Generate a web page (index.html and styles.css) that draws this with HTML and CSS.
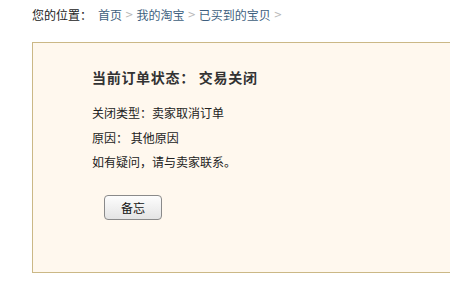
FILE: index.html
```html
<!DOCTYPE html>
<html lang="zh-CN">
<head>
<meta charset="utf-8">
<link rel="stylesheet" href="styles.css">
</head>
<body>
<div class="crumbs">
  <span class="label">您的位置：</span>
  <a class="link">首页</a><span class="sep">&gt;</span>
  <a class="link">我的淘宝</a><span class="sep">&gt;</span>
  <a class="link">已买到的宝贝</a><span class="sep">&gt;</span>
</div>
<div class="status-box">
  <h2 class="title">当前订单状态： 交易关闭</h2>
  <p class="line">关闭类型：卖家取消订单</p>
  <p class="line">原因： 其他原因</p>
  <p class="line">如有疑问，请与卖家联系。</p>
  <div class="actions"><button class="btn">备忘</button></div>
</div>
</body>
</html>
```
FILE: styles.css
```css
html, body {
  margin: 0;
  padding: 0;
  background: #fff;
  font-family: "Noto Sans CJK SC", "Noto Sans", sans-serif;
  font-size: 12px;
  color: #333;
  overflow: hidden;
}
.crumbs {
  height: 30px;
  padding-left: 32px;
  display: flex;
  align-items: center;
  line-height: 16px;
}
.label { color: #222; margin-right: 6px; }
.link { color: #3e5f80; text-decoration: none; }
.sep { color: #b8b8b8; margin: 0 3px; font-family: "DejaVu Sans", sans-serif; font-size: 10px; }
.status-box {
  margin-top: 12px;
  margin-left: 32px;
  width: 440px;
  height: 231px;
  border: 1px solid #cbb886;
  background: #fff8ee;
  padding-left: 59px;
  padding-top: 22px;
  box-sizing: border-box;
}
.title {
  margin: 0 0 12px 0;
  font-size: 14px;
  font-weight: bold;
  color: #333;
  line-height: 24px;
  letter-spacing: 0.7px;
}
.line {
  margin: 0;
  line-height: 24.5px;
  color: #222;
}
.actions {
  padding-top: 20px;
  padding-left: 12px;
}
.btn {
  width: 58px;
  height: 25px;
  border: 1px solid #8a8a8a;
  border-radius: 4px;
  background: linear-gradient(#fdfdfd, #e4e4e4);
  font-family: "Noto Sans CJK SC", sans-serif;
  font-size: 12px;
  color: #111;
  padding: 0;
}
```
